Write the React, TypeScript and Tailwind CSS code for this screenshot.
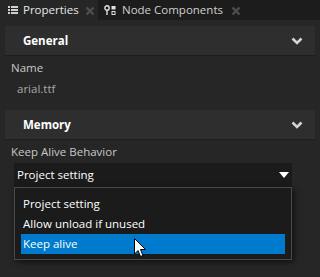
import React from "react";

const font = { fontFamily: '"Open Sans", "Noto Sans", sans-serif' };

function ListIcon() {
  return (
    <svg width="10" height="8" viewBox="0 0 10 8" className="shrink-0">
      <rect x="0" y="0" width="2" height="2" fill="#d0d0d0" />
      <rect x="3" y="0" width="7" height="2" fill="#d0d0d0" />
      <rect x="0" y="3" width="2" height="2" fill="#d0d0d0" />
      <rect x="3" y="3" width="7" height="2" fill="#d0d0d0" />
      <rect x="0" y="6" width="2" height="2" fill="#d0d0d0" />
      <rect x="3" y="6" width="7" height="2" fill="#d0d0d0" />
    </svg>
  );
}

function NodeIcon() {
  return (
    <svg width="12" height="11" viewBox="0 0 12 11" className="shrink-0">
      <circle cx="3" cy="3" r="2.2" fill="none" stroke="#e0e0e0" strokeWidth="1.4" />
      <rect x="2.3" y="5" width="1.4" height="5" fill="#e0e0e0" />
      <rect x="7.5" y="1" width="4" height="3.5" fill="#e0e0e0" />
      <rect x="8" y="6.5" width="3" height="3" fill="none" stroke="#e0e0e0" strokeWidth="1" />
    </svg>
  );
}

function CloseX() {
  return (
    <svg width="10" height="10" viewBox="0 0 10 10">
      <path d="M1.5 1.5 L8.5 8.5 M8.5 1.5 L1.5 8.5" stroke="#4e4e4e" strokeWidth="2.4" />
    </svg>
  );
}

function Chevron() {
  return (
    <svg width="12" height="8" viewBox="0 0 12 8">
      <path d="M1.5 1.5 L6 6 L10.5 1.5" fill="none" stroke="#d4d4d4" strokeWidth="2.6" />
    </svg>
  );
}

function SectionHeader({ title }: { title: string }) {
  return (
    <div className="h-[30px] bg-[#2e2e2e] border-b border-[#1e1e1e] flex items-center justify-between pl-[18px] pr-[12px]">
      <span className="text-[11.5px] font-bold text-white">{title}</span>
      <Chevron />
    </div>
  );
}

export default function App() {
  return (
    <div className="w-[320px] h-[277px] bg-[#262626] overflow-hidden relative" style={font}>
      {/* Tab bar */}
      <div className="h-[20px] bg-[#1c1c1c] flex">
        <div className="w-[98px] bg-[#262626] flex items-center pl-[8px]">
          <ListIcon />
          <span className="ml-[5px] text-[11.5px] text-[#e6e6e6] leading-none">Properties</span>
          <span className="ml-[6px] mt-[2px] flex"><CloseX /></span>
        </div>
        <div className="flex items-center pl-[6px]">
          <NodeIcon />
          <span className="ml-[6px] text-[11.5px] text-[#d0d0d0] leading-none">Node Components</span>
          <span className="ml-[8px] mt-[1px] flex"><CloseX /></span>
        </div>
      </div>

      {/* Content */}
      <div className="px-[5px] pt-[6px]">
        <SectionHeader title="General" />
        <div className="pl-[6px] pt-[4px] h-[54px]">
          <div className="text-[11.5px] text-[#c8c8c8] leading-[16px]">Name</div>
          <div className="pl-[6px] mt-[5px] text-[11.5px] text-[#a8a8a8] leading-[16px]">arial.ttf</div>
        </div>
        <SectionHeader title="Memory" />
        <div className="pl-[6px] pt-[4px]">
          <div className="text-[11.5px] text-[#c8c8c8] leading-[16px]">Keep Alive Behavior</div>
        </div>
        <div className="ml-[9px] mr-[23px] mt-[3px] h-[24px] bg-[#1b1b1b] flex items-center justify-between pl-[3px] pr-[3px]">
          <span className="text-[11.5px] text-white">Project setting</span>
          <svg width="10" height="6" viewBox="0 0 10 6">
            <path d="M0 0 H10 L5 6 Z" fill="#ffffff" />
          </svg>
        </div>
      </div>

      {/* Popup */}
      <div className="absolute left-[14px] top-[187px] w-[278px] h-[73px] bg-[#1b1b1b] border border-[#4a4a4a] shadow-[2px_2px_6px_rgba(0,0,0,0.6)] pt-[6px] px-[6px]">
        <div className="h-[20px] flex items-center pl-[2px] text-[11.5px] text-white">Project setting</div>
        <div className="h-[20px] flex items-center pl-[2px] text-[11.5px] text-white">Allow unload if unused</div>
        <div className="h-[20px] flex items-center pl-[2px] text-[11.5px] text-white bg-[#007acc]">Keep alive</div>
      </div>

      {/* Cursor */}
      <svg className="absolute left-[134px] top-[238px]" width="14" height="21" viewBox="0 0 14 21">
        <path d="M0.5 0.5 L0.5 16 L4 12.5 L6.5 18.5 L9 17.5 L6.5 11.5 L11.5 11.5 Z" fill="#ffffff" stroke="#000000" strokeWidth="1" />
      </svg>
    </div>
  );
}
